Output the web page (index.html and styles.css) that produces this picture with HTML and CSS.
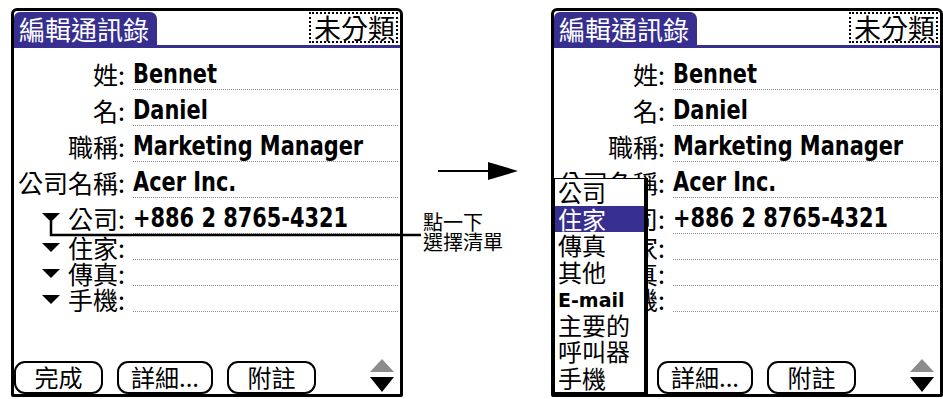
FILE: index.html
```html
<!doctype html>
<html>
<head>
<meta charset="utf-8">
<title>編輯通訊錄</title>
<link rel="stylesheet" href="styles.css">
</head>
<body>
<div class="page">
	<section class="screen">
		<header class="titlebar">
			<div class="tab">編輯通訊錄</div>
			<div class="category">未分類</div>
		</header>
		<div class="fields">
			<div class="row"><span class="label">姓:</span><span class="value"><b>Bennet</b></span></div>
			<div class="row"><span class="label">名:</span><span class="value"><b>Daniel</b></span></div>
			<div class="row"><span class="label">職稱:</span><span class="value"><b>Marketing Manager</b></span></div>
			<div class="row"><span class="label">公司名稱:</span><span class="value"><b>Acer Inc.</b></span></div>
			<div class="row"><span class="label"><i class="tri"></i>公司:</span><span class="value"><b>+886 2 8765-4321</b></span></div>
			<div class="row short"><span class="label"><i class="tri"></i>住家:</span><span class="value"></span></div>
			<div class="row short"><span class="label"><i class="tri"></i>傳真:</span><span class="value"></span></div>
			<div class="row short"><span class="label"><i class="tri"></i>手機:</span><span class="value"></span></div>
		</div>
		<footer class="buttons">
			<span class="btn">完成</span>
			<span class="btn wide">詳細...</span>
			<span class="btn">附註</span>
			<svg class="scroll" width="24" height="34" viewBox="0 0 24 34">
				<polygon points="12,0 24,13 0,13" fill="#8c8c8c"/>
				<polygon points="0,18 24,18 12,33" fill="#000"/>
			</svg>
		</footer>
	</section>

	<div class="gutter">
		<svg class="arrow" width="82" height="20" viewBox="0 0 82 20">
			<line x1="0" y1="10" x2="52" y2="10" stroke="#000" stroke-width="2"/>
			<polygon points="50,1 80,10 50,19" fill="#000"/>
		</svg>
		<p class="note">點一下<br>選擇清單</p>
	</div>

	<section class="screen">
		<header class="titlebar">
			<div class="tab">編輯通訊錄</div>
			<div class="category">未分類</div>
		</header>
		<div class="fields">
			<div class="row"><span class="label">姓:</span><span class="value"><b>Bennet</b></span></div>
			<div class="row"><span class="label">名:</span><span class="value"><b>Daniel</b></span></div>
			<div class="row"><span class="label">職稱:</span><span class="value"><b>Marketing Manager</b></span></div>
			<div class="row"><span class="label">公司名稱:</span><span class="value"><b>Acer Inc.</b></span></div>
			<div class="row"><span class="label"><i class="tri"></i>公司:</span><span class="value"><b>+886 2 8765-4321</b></span></div>
			<div class="row short"><span class="label"><i class="tri"></i>住家:</span><span class="value"></span></div>
			<div class="row short"><span class="label"><i class="tri"></i>傳真:</span><span class="value"></span></div>
			<div class="row short"><span class="label"><i class="tri"></i>手機:</span><span class="value"></span></div>
		</div>
		<footer class="buttons">
			<span class="btn">完成</span>
			<span class="btn wide">詳細...</span>
			<span class="btn">附註</span>
			<svg class="scroll" width="24" height="34" viewBox="0 0 24 34">
				<polygon points="12,0 24,13 0,13" fill="#8c8c8c"/>
				<polygon points="0,18 24,18 12,33" fill="#000"/>
			</svg>
		</footer>
		<!-- 選擇清單 -->
		<ul class="popup">
			<li>公司</li>
			<li class="on">住家</li>
			<li>傳真</li>
			<li>其他</li>
			<li class="latin">E-mail</li>
			<li>主要的</li>
			<li>呼叫器</li>
			<li>手機</li>
		</ul>
	</section>

	<svg class="callout" width="430" height="20" viewBox="0 0 430 20">
		<polyline points="51,0 51,14 421,14" fill="none" stroke="#000" stroke-width="2.5"/>
	</svg>
</div>
</body>
</html>
```

FILE: styles.css
```css
body{
	margin:0;
	background:#fff;
	font-family:"Noto Sans CJK TC","Noto Sans CJK SC",sans-serif;
	color:#000;
}

.page{
	position:relative;
	display:flex;
	padding:8px 0 0 11px;
}

.screen{
	position:relative;
	box-sizing:border-box;
	width:392px;
	height:389px;
	border:3px solid #000;
	border-radius:6px 6px 2px 2px;
	display:flex;
	flex-direction:column;
}

.titlebar{
	display:flex;
	align-items:flex-start;
	height:33px;
	padding-top:1px;
	border-bottom:3px solid #362f8f;
}

.tab{
	height:33px;
	line-height:33px;
	padding:0 8px 0 5px;
	background:#362f8f;
	color:#fff;
	font-size:26px;
	border-radius:6px 7px 0 0;
}

.category{
	margin-left:auto;
	margin-right:2px;
	height:27px;
	line-height:27px;
	padding:0 1px 0 3px;
	border:2px dotted #000;
	font-size:27px;
}

.fields{
	padding-top:6px;
}

.row{
	display:grid;
	grid-template-columns:111px 265px;
	column-gap:8px;
	height:36px;
}

.row.short{
	height:26px;
}

.label{
	display:flex;
	align-items:flex-end;
	justify-content:flex-end;
	font-size:25px;
	line-height:26px;
	padding-bottom:3px;
	white-space:nowrap;
}

.row.short .label{
	padding-bottom:0;
}

.tri{
	width:0;
	height:0;
	border-left:9px solid transparent;
	border-right:9px solid transparent;
	border-top:9px solid #000;
	margin:0 auto 9px 28px;
}

.row.short .tri{
	margin-bottom:8px;
}

.value{
	display:flex;
	align-items:flex-end;
	border-bottom:1px dotted #8a8a8a;
	font-family:"DejaVu Sans Condensed","Liberation Sans",sans-serif;
	font-weight:bold;
	font-size:27px;
	line-height:26px;
	padding-bottom:2px;
	white-space:nowrap;
}

.value b{
	display:inline-block;
	transform:scaleX(0.86);
	transform-origin:left bottom;
}

.buttons{
	margin-top:auto;
	display:flex;
	align-items:flex-end;
	gap:14px;
}

.btn{
	box-sizing:border-box;
	width:89px;
	height:33px;
	border:2px solid #000;
	border-radius:11px;
	text-align:center;
	font-size:24px;
	line-height:28px;
}

.btn.wide{
	width:96px;
}

.scroll{
	margin:0 6px 1px auto;
}

.gutter{
	width:148px;
	position:relative;
}

.arrow{
	display:block;
	margin:153px 0 0 35px;
}

.note{
	margin:31px 0 0 20px;
	font-size:20px;
	line-height:20px;
}

.popup{
	position:absolute;
	left:0;
	top:167px;
	bottom:-1px;
	width:89px;
	margin:0;
	padding:0;
	list-style:none;
	background:#fff;
	border:1px solid #000;
	border-right:4px solid #000;
	border-bottom:3px solid #000;
}

.popup li{
	height:26.5px;
	line-height:26px;
	padding-left:3px;
	font-size:24px;
}

.popup li.on{
	background:#362f8f;
	color:#fff;
}

.popup li.latin{
	font-family:"DejaVu Sans",sans-serif;
	font-weight:bold;
	font-size:19px;
	line-height:30px;
}

.callout{
	position:absolute;
	left:0;
	top:221px;
}
```
